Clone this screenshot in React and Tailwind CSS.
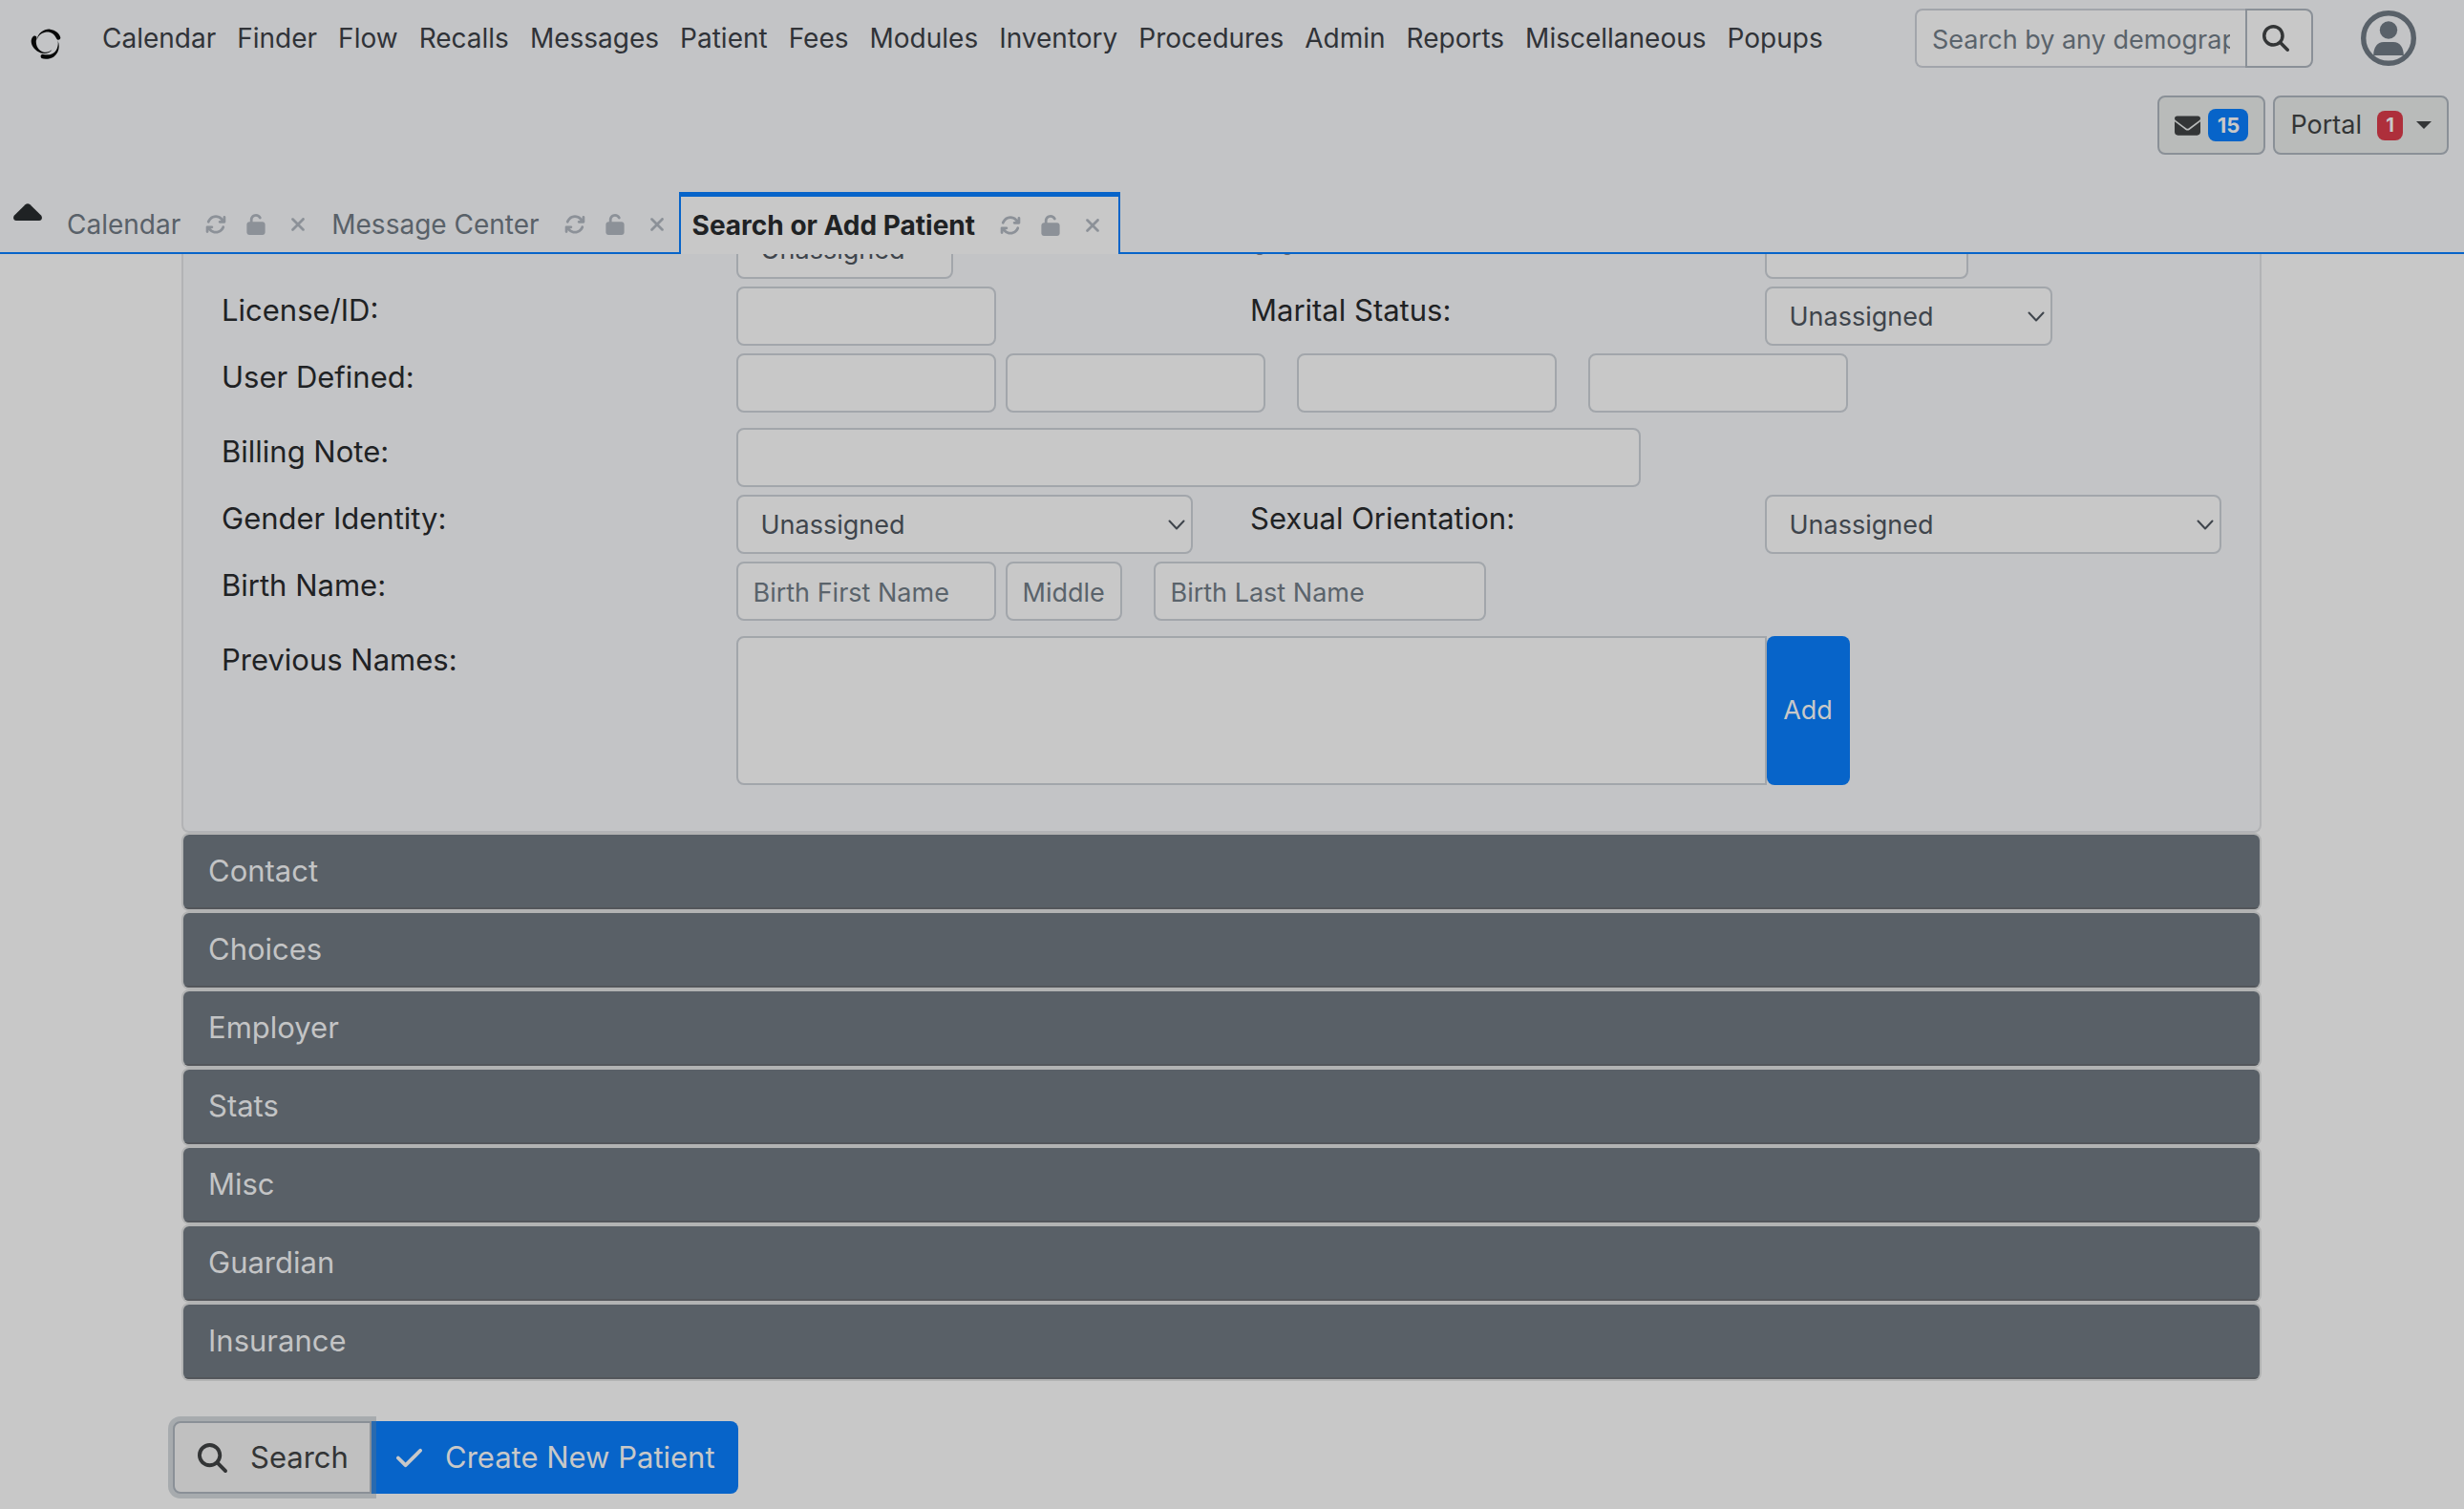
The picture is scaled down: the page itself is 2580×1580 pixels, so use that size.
import React from "react";
import {
  FaArrowsRotate,
  FaUnlock,
  FaXmark,
  FaMagnifyingGlass,
  FaEnvelope,
  FaCheck,
} from "react-icons/fa6";

const MENU = [
  "Calendar", "Finder", "Flow", "Recalls", "Messages", "Patient", "Fees",
  "Modules", "Inventory", "Procedures", "Admin", "Reports", "Miscellaneous", "Popups",
];

const SECTIONS = ["Contact", "Choices", "Employer", "Stats", "Misc", "Guardian", "Insurance"];

const FIELD =
  "h-[62px] rounded-lg border-2 border-[#a2a6ab] bg-[#c8c8c8] px-4 pt-0.5 text-[27px] text-[#3f454c] placeholder:text-[#5a636b] placeholder:opacity-100 outline-none";

function Logo() {
  return (
    <svg viewBox="64 54 100 100" className="size-8" fill="#070808" aria-hidden="true">
      <path d="M84 92C88 66 110 54 128 56C145 58 160 70 162 84C161 92 152 93 149 87C142 70 126 62 112 66C98 69 88 78 84 92Z" />
      <path d="M153 92C162 115 155 135 140 146C128 154 110 155 100 151C94 145 98 136 106 138C122 142 140 138 148 124C154 113 155 102 153 92Z" />
      <path d="M80 78C86 79 84 86 82 95C82 112 90 127 108 131C118 133 128 129 134 123C128 134 112 138 98 134C80 128 66 112 66 95C67 85 72 76 80 78Z" />
    </svg>
  );
}

function Avatar() {
  return (
    <svg viewBox="0 0 58 58" className="size-[58px]" fill="#596169" aria-hidden="true">
      <circle cx="29" cy="29" r="26.3" fill="none" stroke="#596169" strokeWidth="5.4" />
      <circle cx="29" cy="20.5" r="9.2" />
      <path d="M13.2 47C13.2 39 17 33 24 33H34C41 33 44.8 39 44.8 47Z" />
    </svg>
  );
}

function TabTools() {
  return (
    <span className="flex items-center text-[22px] text-[#8c9198]">
      <button type="button" aria-label="Refresh tab"><FaArrowsRotate /></button>
      <button type="button" aria-label="Lock tab" className="ml-5"><FaUnlock /></button>
      <button type="button" aria-label="Close tab" className="ml-[22px]"><FaXmark /></button>
    </span>
  );
}

function Tab({ children }) {
  return (
    <div className="flex items-center gap-[26px] border-b-2 border-[#0764c9] px-3 pt-1">
      <button type="button" className="text-[28px] text-[#596169]">{children}</button>
      <TabTools />
    </div>
  );
}

function Label({ children, htmlFor }) {
  return (
    <label htmlFor={htmlFor} className="pl-5 text-[31px] leading-[50px] text-[#1f2224]">
      {children}
    </label>
  );
}

function Select({ id, width }) {
  return (
    <span className="relative inline-block align-top">
      <select id={id} className={`${FIELD} ${width} appearance-none pl-6`}>
        <option>Unassigned</option>
      </select>
      <svg viewBox="0 0 18 12" className="pointer-events-none absolute top-[26px] right-2 h-3 w-[18px]" fill="none" stroke="#3f454c" strokeWidth="2" strokeLinecap="round" strokeLinejoin="round" aria-hidden="true">
        <path d="M1.5 1.5L9 9.5L16.5 1.5" />
      </svg>
    </span>
  );
}

function DemographicsForm() {
  return (
    <form className="-mt-9 flex flex-col gap-2 rounded-b-lg border-x-2 border-b-2 border-[#b2b3b5] bg-[#c3c4c6] pb-12 pl-5">
      <div className="grid grid-cols-4">
        <span />
        <div className="pl-5">
          <select aria-label="Sex" className={`${FIELD} w-[227px] appearance-none pl-6`}>
            <option>Unassigned</option>
          </select>
        </div>
        <Label htmlFor="ss">S.S.:</Label>
        <div className="pl-5"><input id="ss" className={`${FIELD} w-[213px]`} /></div>
      </div>
      <div className="grid grid-cols-4">
        <Label htmlFor="license">License/ID:</Label>
        <div className="pl-5"><input id="license" className={`${FIELD} w-[272px]`} /></div>
        <Label htmlFor="marital">Marital Status:</Label>
        <div className="pl-5"><Select id="marital" width="w-[301px]" /></div>
      </div>
      <div className="mb-2 grid grid-cols-4">
        <Label htmlFor="user1">User Defined:</Label>
        <div className="col-span-3 flex pl-5">
          <input id="user1" className={`${FIELD} mr-[10px] w-[272px]`} />
          <input aria-label="User defined 2" className={`${FIELD} mr-[33px] w-[272px]`} />
          <input aria-label="User defined 3" className={`${FIELD} mr-[33px] w-[272px]`} />
          <input aria-label="User defined 4" className={`${FIELD} w-[272px]`} />
        </div>
      </div>
      <div className="grid grid-cols-4">
        <Label htmlFor="billing">Billing Note:</Label>
        <div className="col-span-3 pl-5"><input id="billing" className={`${FIELD} w-[947px]`} /></div>
      </div>
      <div className="grid grid-cols-4">
        <Label htmlFor="gender">Gender Identity:</Label>
        <div className="pl-5"><Select id="gender" width="w-[478px]" /></div>
        <Label htmlFor="orientation">Sexual Orientation:</Label>
        <div className="pl-5"><Select id="orientation" width="w-[478px]" /></div>
      </div>
      <div className="mb-2 grid grid-cols-4">
        <Label htmlFor="birth-first">Birth Name:</Label>
        <div className="col-span-3 flex pl-5">
          <input id="birth-first" placeholder="Birth First Name" className={`${FIELD} mr-[10px] w-[272px]`} />
          <input aria-label="Birth middle name" placeholder="Middle" className={`${FIELD} mr-[33px] w-[122px]`} />
          <input aria-label="Birth last name" placeholder="Birth Last Name" className={`${FIELD} w-[348px]`} />
        </div>
      </div>
      <div className="grid grid-cols-4">
        <Label htmlFor="previous">Previous Names:</Label>
        <div className="col-span-3 flex pl-5">
          <textarea id="previous" className="h-[156px] w-[1079px] resize-none rounded-l-lg border-2 border-[#a2a6ab] bg-[#c8c8c8] outline-none" />
          <button type="button" className="w-[87px] rounded-lg bg-[#0764c9] text-[27px] text-[#c8c8c8]">Add</button>
        </div>
      </div>
    </form>
  );
}

export default function App() {
  return (
    <div className="min-h-screen bg-[#c8c8c8] font-['Inter',sans-serif]">
      <header className="bg-[#c3c4c6] pt-[9px]">
        <div className="flex h-[62px] items-center pr-[50px] pl-8">
          <a href="#home" aria-label="Home" className="pt-3"><Logo /></a>
          <nav className="ml-[43px] flex gap-[22px]">
            {MENU.map((item) => (
              <button key={item} type="button" className="text-[28px] text-[#303338]">{item}</button>
            ))}
          </nav>
          <div className="ml-auto flex">
            <input aria-label="Search by any demographics" placeholder="Search by any demographics" className="h-[62px] w-[346px] rounded-l-lg border-2 border-r-0 border-[#a2a5ab] bg-[#c8c8c8] px-4 pt-0.5 text-[27px] placeholder:text-[#5a636b] placeholder:opacity-100" />
            <button type="button" aria-label="Search" className="flex w-[71px] items-center rounded-r-lg border-2 border-[#8a9097] bg-[#c8c8c8] pl-4 text-[28px] text-[#333536]">
              <FaMagnifyingGlass />
            </button>
          </div>
          <button type="button" aria-label="Current user" className="ml-[50px]"><Avatar /></button>
        </div>

        <div className="mt-[29px] flex justify-end gap-2 pr-4">
          <button type="button" aria-label="Messages 15" className="flex h-[62px] items-center gap-2 rounded-lg border-2 border-[#8a9097] bg-[#b9bbba] px-4 text-[27px] text-[#333536]">
            <FaEnvelope />
            <span className="w-[42px] rounded-lg bg-[#0764c9] text-center text-[22px] leading-[34px] font-bold text-[#c8c8c8]">15</span>
          </button>
          <button type="button" className="flex h-[62px] items-center rounded-lg border-2 border-[#8a9097] bg-[#b9bbba] px-4 text-[27px] text-[#333536]">
            Portal
            <span className="ml-4 w-[27px] rounded-lg bg-[#ae2f3b] text-center text-[20px] leading-[31px] font-bold text-[#c8c8c8]">1</span>
            <svg viewBox="0 0 16 8" className="ml-[14px] h-2 w-4" fill="#333536" aria-hidden="true"><path d="M0 0H16L8 8Z" /></svg>
          </button>
        </div>

        <div className="mt-[39px] flex h-[65px]">
          <div className="border-b-2 border-[#0764c9] pt-3 pr-[14px] pl-[14px]">
            <button type="button" aria-label="Collapse menu" className="block">
              <svg viewBox="0 0 30 18" className="h-[18px] w-[30px]" fill="#1f2224" aria-hidden="true">
                <path d="M12.5 1.2C14 -0.2 16 -0.2 17.5 1.2L29 12.5C31 15 29.5 18 27 18H3C0.5 18 -1 15 1 12.5Z" />
              </svg>
            </button>
          </div>
          <Tab>Calendar</Tab>
          <Tab>Message Center</Tab>
          <div className="flex items-center gap-[26px] border-x-2 border-t-[5px] border-[#0764c9] bg-[#c8c8c8] pr-4 pl-3">
            <button type="button" className="text-[28px] font-bold text-[#1f2224]">Search or Add Patient</button>
            <TabTools />
          </div>
          <div className="flex-1 border-b-2 border-[#0764c9]" />
        </div>
      </header>

      <main className="overflow-hidden pr-[212px] pb-3 pl-[190px]">
        <DemographicsForm />
        {SECTIONS.map((name) => (
          <section key={name} className="overflow-hidden rounded-lg border-2 border-[#b2b3b3]">
            <button type="button" className="block w-full border-b-2 border-[#53565b] bg-[#596067] px-[26px] text-left text-[31px] leading-[76px] text-[#c3c4c5]">
              {name}
            </button>
          </section>
        ))}
        <div className="mt-[42px] -ml-[9px] flex">
          <button type="button" className="relative z-10 flex h-[76px] w-[208px] items-center gap-6 rounded-l-lg border-2 border-[#8a9097] bg-[#c0c0c0] pl-6 text-[31px] text-[#333536] ring-[5px] ring-[#6b757d]/35">
            <FaMagnifyingGlass />
            Search
          </button>
          <button type="button" className="flex h-[76px] items-center gap-[22px] rounded-r-lg bg-[#0764c9] px-6 text-[31px] text-[#c8c8c8]">
            <FaCheck />
            Create New Patient
          </button>
        </div>
      </main>
    </div>
  );
}
